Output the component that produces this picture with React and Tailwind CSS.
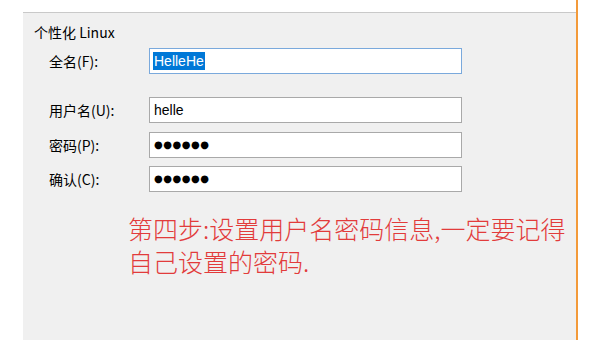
// Personalize Linux — account setup step screenshot

const labelFont = { fontFamily: '"Noto Sans CJK SC", "Noto Sans", sans-serif' };

function Field({ label, children, focused, className = '' }) {
  return (
    <div className={`flex items-center h-[26px] ${className}`}>
      <div className="w-[126px] shrink-0 pl-[26px] text-[14px] text-black font-['Noto_Sans_CJK_SC',sans-serif] whitespace-nowrap">
        {label}
      </div>
      <div
        className={`w-[313px] h-[26px] bg-white flex items-center pl-[3px] border ${
          focused ? 'border-[#7aa9dc]' : 'border-[#a9a9a9]'
        }`}
      >
        {children}
      </div>
    </div>
  );
}

function Dots() {
  return (
    <span className="text-[10px] tracking-[0.5px] text-black font-['DejaVu_Sans',sans-serif] leading-none pl-[1px]">
      ●●●●●●
    </span>
  );
}

export default function App() {
  return (
    <div className="w-[600px] h-[340px] bg-white flex overflow-hidden">
      <div className="w-[23px] shrink-0" />

      <div className="w-[553px] shrink-0 mt-[12px] bg-[#f0f0f0] border-t border-[#c9c9c9] flex flex-col">
        <div className="pl-[11px] pt-[10px] h-[35px] text-[14px] text-black font-['Noto_Sans_CJK_SC',sans-serif] leading-[18px]">
          个性化 Linux
        </div>

        <Field label="全名(F):" focused>
          <span className="bg-[#0078d7] text-white text-[14px] leading-[18px] px-[1px] font-['Liberation_Sans',sans-serif]">
            HelleHe
          </span>
        </Field>

        <Field label="用户名(U):" className="mt-[23px]">
          <span className="text-[14px] text-black font-['Liberation_Sans',sans-serif] pl-[1px]">helle</span>
        </Field>

        <Field label="密码(P):" className="mt-[9px]">
          <Dots />
        </Field>

        <Field label="确认(C):" className="mt-[8px]">
          <Dots />
        </Field>

        <div
          className="mt-[20px] pl-[105px] text-[25px] leading-[33px] text-[#e23b3b] font-light"
          style={labelFont}
        >
          <div>第四步:设置用户名密码信息,一定要记得</div>
          <div>自己设置的密码.</div>
        </div>
      </div>

      <div className="w-[2px] shrink-0 bg-[#f39a3a]" />
      <div className="flex-1" />
    </div>
  );
}
